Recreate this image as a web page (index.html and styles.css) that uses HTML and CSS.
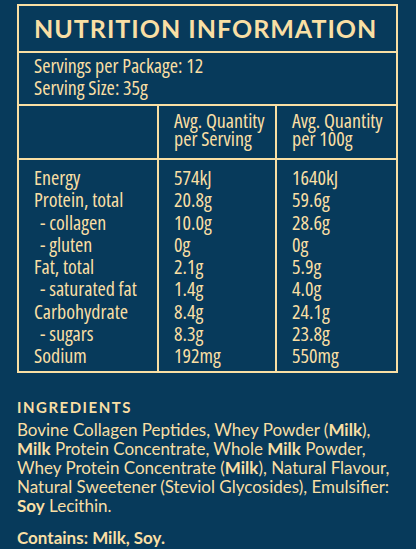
FILE: index.html
```html
<!DOCTYPE html>
<html lang="en">
<head>
    <meta charset="UTF-8">
    <meta name="viewport" content="width=device-width, initial-scale=1.0">
    <title>Nutrition Information</title>
    <link rel="stylesheet" href="styles.css">
</head>
<body>
    <div class="label">
        <table class="nip">
            <colgroup>
                <col class="col-name">
                <col class="col-serve">
                <col class="col-100">
            </colgroup>
            <tr>
                <th colspan="3" class="title">NUTRITION INFORMATION</th>
            </tr>
            <tr>
                <td colspan="3" class="servings">Servings per Package: 12<br>Serving Size: 35g</td>
            </tr>
            <tr class="head">
                <td></td>
                <td>Avg. Quantity<br>per Serving</td>
                <td>Avg. Quantity<br>per 100g</td>
            </tr>
            <tr class="rows">
                <td>
                    <div>Energy</div>
                    <div>Protein, total</div>
                    <div class="sub">- collagen</div>
                    <div class="sub">- gluten</div>
                    <div>Fat, total</div>
                    <div class="sub">- saturated fat</div>
                    <div>Carbohydrate</div>
                    <div class="sub">- sugars</div>
                    <div>Sodium</div>
                </td>
                <td>
                    <div>574kJ</div>
                    <div>20.8g</div>
                    <div>10.0g</div>
                    <div>0g</div>
                    <div>2.1g</div>
                    <div>1.4g</div>
                    <div>8.4g</div>
                    <div>8.3g</div>
                    <div>192mg</div>
                </td>
                <td>
                    <div>1640kJ</div>
                    <div>59.6g</div>
                    <div>28.6g</div>
                    <div>0g</div>
                    <div>5.9g</div>
                    <div>4.0g</div>
                    <div>24.1g</div>
                    <div>23.8g</div>
                    <div>550mg</div>
                </td>
            </tr>
        </table>

        <div class="ingredients">
            <h2>INGREDIENTS</h2>
            <p>Bovine Collagen Peptides, Whey Powder (<b>Milk</b>),<br>
            <b>Milk</b> Protein Concentrate, Whole <b>Milk</b> Powder,<br>
            Whey Protein Concentrate (<b>Milk</b>), Natural Flavour,<br>
            Natural Sweetener (Steviol Glycosides), Emulsifier:<br>
            <b>Soy</b> Lecithin.</p>
            <p class="contains"><b>Contains: Milk, Soy.</b></p>
        </div>
    </div>
</body>
</html>
```

FILE: styles.css
```css
body {
    margin: 0;
    background: #073a5b;
    color: #f9dfa4;
}
.label {
    padding: 4px 18px 0 17px;
}
.nip {
    width: 381px;
    table-layout: fixed;
    border-collapse: collapse;
    border: 2px solid #f9dfa4;
    font-family: "Open Sans", sans-serif;
    font-stretch: 83%;
    font-weight: 500;
    font-size: 20px;
}
.col-name {
    width: 140px;
}
.col-serve {
    width: 118px;
}
.nip th,
.nip td {
    border: 2px solid #f9dfa4;
    padding: 0 0 0 15px;
    text-align: left;
    vertical-align: top;
}
.nip .title {
    font-family: Lato, sans-serif;
    font-stretch: normal;
    font-weight: 700;
    font-size: 25px;
    letter-spacing: 1px;
    line-height: 30px;
    padding-top: 7px;
    padding-bottom: 8px;
}
.nip .servings {
    line-height: 22px;
    padding-top: 2px;
    padding-bottom: 5px;
}
.head td {
    line-height: 18px;
    padding-top: 6px;
    padding-bottom: 10px;
}
.rows td {
    line-height: 22.3px;
    padding-top: 7px;
    padding-bottom: 3px;
}
.rows .sub {
    padding-left: 6px;
}
.ingredients {
    margin-top: 25px;
    font-family: Lato, sans-serif;
}
.ingredients h2 {
    margin: 0;
    font-size: 15px;
    font-weight: 700;
    letter-spacing: 1.5px;
    line-height: 19px;
}
.ingredients p {
    margin: 3px 0 0;
    font-size: 17px;
    line-height: 19.2px;
    white-space: nowrap;
}
.ingredients .contains {
    margin-top: 12px;
}
```
